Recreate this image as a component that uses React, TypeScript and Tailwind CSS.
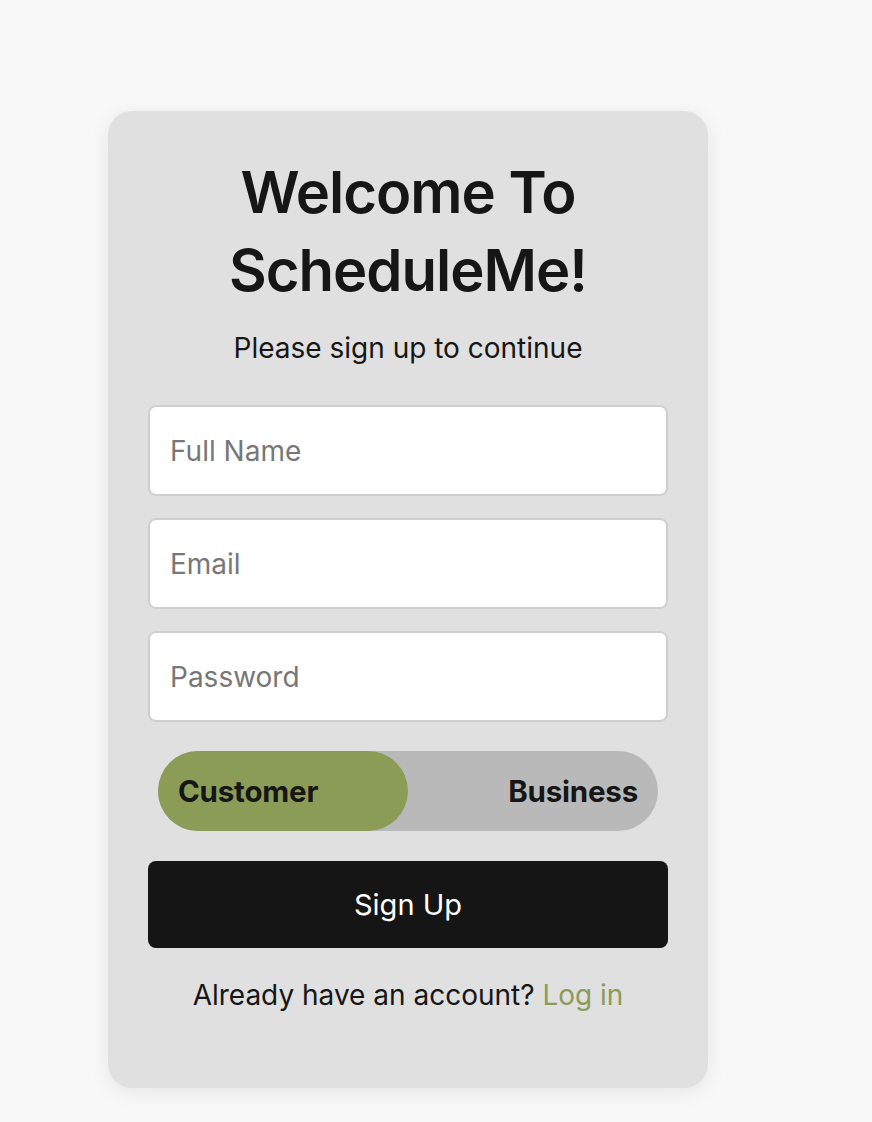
export default function App() {
  return (
    <div
      className="min-h-screen bg-[#f8f8f8] pt-[111px] pl-[108px]"
      style={{ fontFamily: "Inter, 'Noto Sans', sans-serif" }}
    >
      <div className="w-[600px] h-[977px] rounded-[24px] bg-[#e0e0e0] px-10 pt-[42px] shadow-[0_4px_20px_rgba(0,0,0,0.08)] flex flex-col items-center">
        <h1 className="text-center text-[58px] leading-[78px] font-semibold text-[#161616] tracking-[-1px]">
          Welcome To
          <br />
          ScheduleMe!
        </h1>
        <p className="mt-[20px] text-[28px] leading-[38px] text-[#161616]">Please sign up to continue</p>

        <div className="mt-[38px] w-full flex flex-col gap-[22px]">
          {["Full Name", "Email", "Password"].map((p) => (
            <input
              key={p}
              type={p === "Password" ? "password" : "text"}
              placeholder={p}
              className="w-full h-[91px] rounded-[8px] border-2 border-[#cfcfcf] bg-white px-5 text-[28px] text-[#161616] placeholder:text-[#777777] outline-none"
            />
          ))}
        </div>

        <div className="mt-[29px] w-[500px] h-[80px] rounded-full bg-[#b9b9b9] flex items-center justify-between">
          <div className="w-[250px] h-full rounded-full bg-[#8a9c56] flex items-center pl-5">
            <span className="text-[29.5px] font-bold text-[#161616] tracking-[-0.2px]">Customer</span>
          </div>
          <span className="pr-5 text-[29.5px] font-bold text-[#161616] tracking-[-0.2px]">Business</span>
        </div>

        <button className="mt-[30px] w-full h-[87px] rounded-[8px] bg-[#151515] text-white text-[29px]">
          Sign Up
        </button>

        <p className="mt-[26px] text-[28px] text-[#161616]">
          Already have an account? <span className="text-[#8a9c56]">Log in</span>
        </p>
      </div>
    </div>
  );
}
